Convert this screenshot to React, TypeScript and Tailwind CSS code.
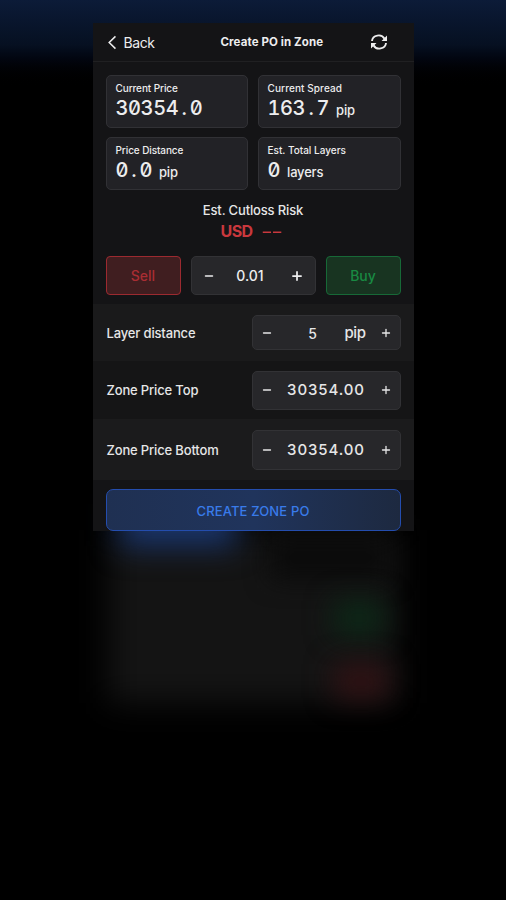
import { Minus, Plus } from 'lucide-react';

interface StatCardProps {
  label: string;
  value: string;
  unit?: string;
  labelClass: string;
}

function StatCard({ label, value, unit, labelClass }: StatCardProps) {
  const [whole, fraction] = value.split('.');

  return (
    <div className="h-[53px] rounded-[5px] border border-[#313135] bg-[#222226] pl-[9px] pt-[6px] text-[#ededee]">
      <div className={`text-[10px] leading-3 font-medium whitespace-nowrap ${labelClass}`}>{label}</div>
      <div className="mt-[2px] flex items-baseline gap-[7px] whitespace-nowrap">
        <span className="text-[20px] leading-6 font-medium tracking-[-0.4px] [font-feature-settings:'zero','tnum']">
          {whole}
          {fraction && (
            <>
              <span className="mx-[3.2px]">.</span>
              {fraction}
            </>
          )}
        </span>
        {unit && <span className="text-[13px] font-medium tracking-[-0.2px]">{unit}</span>}
      </div>
    </div>
  );
}

interface FieldRowProps {
  label: string;
  value: string;
  unit?: string;
  rowClass: string;
  boxClass: string;
}

function FieldRow({ label, value, unit, rowClass, boxClass }: FieldRowProps) {
  return (
    <div className={`flex items-center justify-between pl-[14px] pr-[13px] text-[#e6e6e7] ${rowClass}`}>
      <span className="pt-[2px] text-[13px] font-medium tracking-[-0.15px] whitespace-nowrap">{label}</span>
      <div className={`flex w-[149px] items-center rounded-[5px] border border-[#323235] bg-[#27272a] px-[8px] ${boxClass}`}>
        <Minus className="size-3" strokeWidth={2.6} />
        {unit ? (
          <div className="flex flex-1 items-center pt-px">
            <span className="w-[80px] text-center text-[14px] font-medium">{value}</span>
            <span className="-ml-[8px] text-[15px] font-medium tracking-[-0.4px]">{unit}</span>
          </div>
        ) : (
          <span className="flex-1 pt-px text-center text-[15px] font-medium tracking-[0.9px]">{value}</span>
        )}
        <Plus className="size-3" strokeWidth={2.6} />
      </div>
    </div>
  );
}

function Backdrop() {
  return (
    <div className="pointer-events-none absolute inset-0 overflow-hidden">
      <div className="absolute inset-x-0 top-0 h-[90px] bg-linear-to-b from-[#0c1b38] via-[#061021] to-black" />
      <div className="absolute left-[108px] top-[530px] h-[173px] w-[290px] bg-[#141414] blur-[16px]" />
      <div className="absolute left-[270px] top-[536px] h-[44px] w-[120px] bg-[#0b0b0b] blur-[12px]" />
      <div className="absolute left-[120px] top-[504px] h-[42px] w-[116px] bg-[#1c3870] blur-[15px]" />
      <div className="absolute left-[334px] top-[601px] h-[34px] w-[50px] bg-[#0c2817] blur-[14px]" />
      <div className="absolute left-[334px] top-[664px] h-[34px] w-[54px] bg-[#311214] blur-[14px]" />
    </div>
  );
}

export default function App() {
  return (
    <div className="relative flex h-[900px] w-[506px] justify-center overflow-hidden bg-black pt-[23px] font-['Inter',sans-serif]">
      <Backdrop />
      <main className="relative h-[508px] w-[321px] bg-[#141416]">
        <header className="flex h-[39px] items-center border-b border-[#202022] pl-[14px] pr-[26px] text-[#ededee]">
          <div className="flex w-[114px] items-center gap-[7px]">
            <svg viewBox="0 0 10 16" className="h-[15px] w-[10px]" fill="none" stroke="currentColor" strokeWidth="1.6">
              <path d="M8.7 1.5 2 8l6.7 6.5" />
            </svg>
            <span className="text-[14px] tracking-[-0.4px]">Back</span>
          </div>
          <h1 className="pt-[2px] text-[11.5px] font-bold tracking-[0.1px] whitespace-nowrap">Create PO in Zone</h1>
          <svg viewBox="0 0 18 16" className="ml-auto h-4 w-[18px]" fill="none" stroke="currentColor" strokeWidth="1.9">
            <path d="M2 7A6.6 6 0 0 1 14.5 4.8M3.5 11.2A6.6 6 0 0 0 16 9" />
            <path d="M17 1.5v5.5h-5.5zM1 14.5V9h5.5z" fill="currentColor" stroke="none" />
          </svg>
        </header>

        <section className="grid grid-cols-[142px_143px] gap-x-[10px] gap-y-[9px] pl-[13px] pt-[13px]">
          <StatCard label="Current Price" value="30354.0" labelClass="tracking-[-0.1px]" />
          <StatCard label="Current Spread" value="163.7" unit="pip" labelClass="tracking-[0.1px]" />
          <StatCard label="Price Distance" value="0.0" unit="pip" labelClass="tracking-[-0.1px]" />
          <StatCard label="Est. Total Layers" value="0" unit="layers" labelClass="tracking-[0px]" />
        </section>

        <section className="mt-[11px] text-center">
          <div className="text-[13px] leading-[18px] font-medium tracking-[-0.15px] text-[#e6e6e7]">Est. Cutloss Risk</div>
          <div className="mt-[2px] flex items-center justify-center gap-[9px] pr-[4px] leading-[20px] text-[#c9383d]">
            <span className="text-[16px] font-bold tracking-[-0.6px]">USD</span>
            <span className="w-[20px] origin-left scale-x-[1.6] text-left text-[16px] font-medium tracking-[-1px]">--</span>
          </div>
        </section>

        <section className="mt-[15px] flex h-[39px] gap-[10px] px-[13px]">
          <button className="w-[75px] rounded-[4px] border border-[#9c2a30] bg-[#401e20] text-[14px] font-medium text-[#a92d33]">Sell</button>
          <div className="flex w-[125px] items-center justify-between rounded-[5px] border border-[#323235] bg-[#27272a] pl-[11px] pr-[10px] text-[#ededee]">
            <Minus className="size-3" strokeWidth={3} />
            <span className="pr-[5px] text-[14px] font-medium">0.01</span>
            <Plus className="size-[14px]" strokeWidth={3} />
          </div>
          <button className="w-[75px] rounded-[4px] border border-[#176937] bg-[#183421] text-[14px] font-medium text-[#198a43]">Buy</button>
        </section>

        <section className="mt-[9px]">
          <FieldRow label="Layer distance" value="5" unit="pip" rowClass="h-[57px] bg-[#1a1a1b]" boxClass="h-[35px]" />
          <FieldRow label="Zone Price Top" value="30354.00" rowClass="h-[58px] bg-[#151516]" boxClass="h-[39px]" />
          <FieldRow label="Zone Price Bottom" value="30354.00" rowClass="h-[61px] bg-[#1b1b1c]" boxClass="h-[40px]" />
        </section>

        <button className="mx-[13px] mt-[9px] h-[42px] w-[295px] rounded-[7px] border border-[#244dae] bg-linear-to-r from-[#1f3052] via-[#20345c] to-[#1d2940] pt-[3px] text-[13px] font-medium tracking-[0.15px] text-[#397bea]">
          CREATE ZONE PO
        </button>
      </main>
    </div>
  );
}
